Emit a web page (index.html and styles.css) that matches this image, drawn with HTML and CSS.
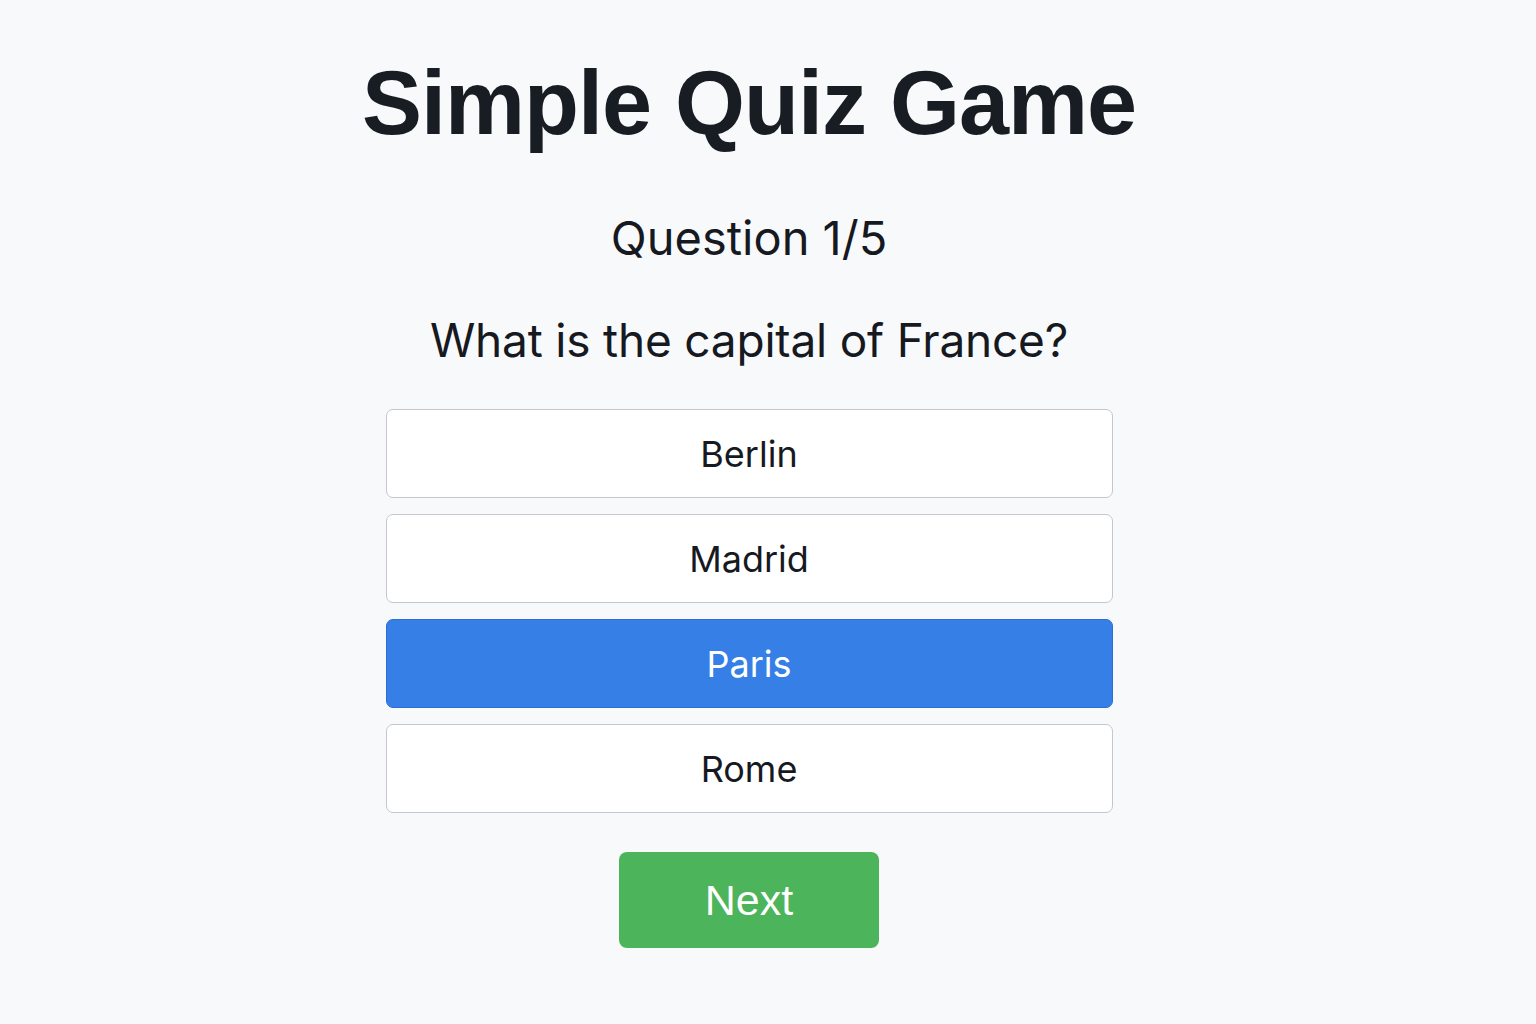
FILE: index.html
```html
<!DOCTYPE html>
<html lang="en">
<head>
<meta charset="utf-8">
<title>Simple Quiz Game</title>
<link rel="stylesheet" href="styles.css">
</head>
<body>
<main class="quiz">
  <h1 class="title">Simple Quiz Game</h1>
  <h2 class="counter">Question 1/5</h2>
  <p class="question">What is the capital of France?</p>
  <div class="options">
    <button class="option">Berlin</button>
    <button class="option">Madrid</button>
    <button class="option selected">Paris</button>
    <button class="option">Rome</button>
  </div>
  <button class="next">Next</button>
</main>
</body>
</html>
```
FILE: styles.css
```css
html, body {
  margin: 0;
  padding: 0;
  background: #f8f9fb;
}
body {
  font-family: Inter, "Noto Sans", sans-serif;
  color: #16191f;
}
.quiz {
  display: flex;
  flex-direction: column;
  align-items: center;
  padding-top: 54px;
  padding-right: 38px;
}
.title {
  margin: 0;
  font-family: "Liberation Sans", Arial, sans-serif;
  font-weight: 700;
  font-size: 90px;
  line-height: 98px;
  color: #181c23;
  letter-spacing: -1px;
}
.counter {
  margin: 58px 0 0;
  font-weight: 400;
  font-size: 47px;
  line-height: 56px;
}
.question {
  margin: 46px 0 0;
  font-size: 46px;
  line-height: 56px;
  letter-spacing: -0.2px;
}
.options {
  margin-top: 41px;
  display: flex;
  flex-direction: column;
  gap: 16px;
  width: 727px;
}
.option {
  height: 89px;
  border: 1.5px solid #c4c7cc;
  border-radius: 7px;
  background: #ffffff;
  font-family: Inter, "Noto Sans", sans-serif;
  font-size: 36px;
  color: #16191f;
  padding: 0;
}
.option.selected {
  background: #357fe6;
  border-color: #2b6fd6;
  color: #ffffff;
}
.next {
  margin-top: 39px;
  width: 260px;
  height: 96px;
  border: none;
  border-radius: 8px;
  background: #4cb45a;
  color: #ffffff;
  font-family: "Liberation Sans", Arial, sans-serif;
  font-size: 43px;
  padding: 0;
}
```
